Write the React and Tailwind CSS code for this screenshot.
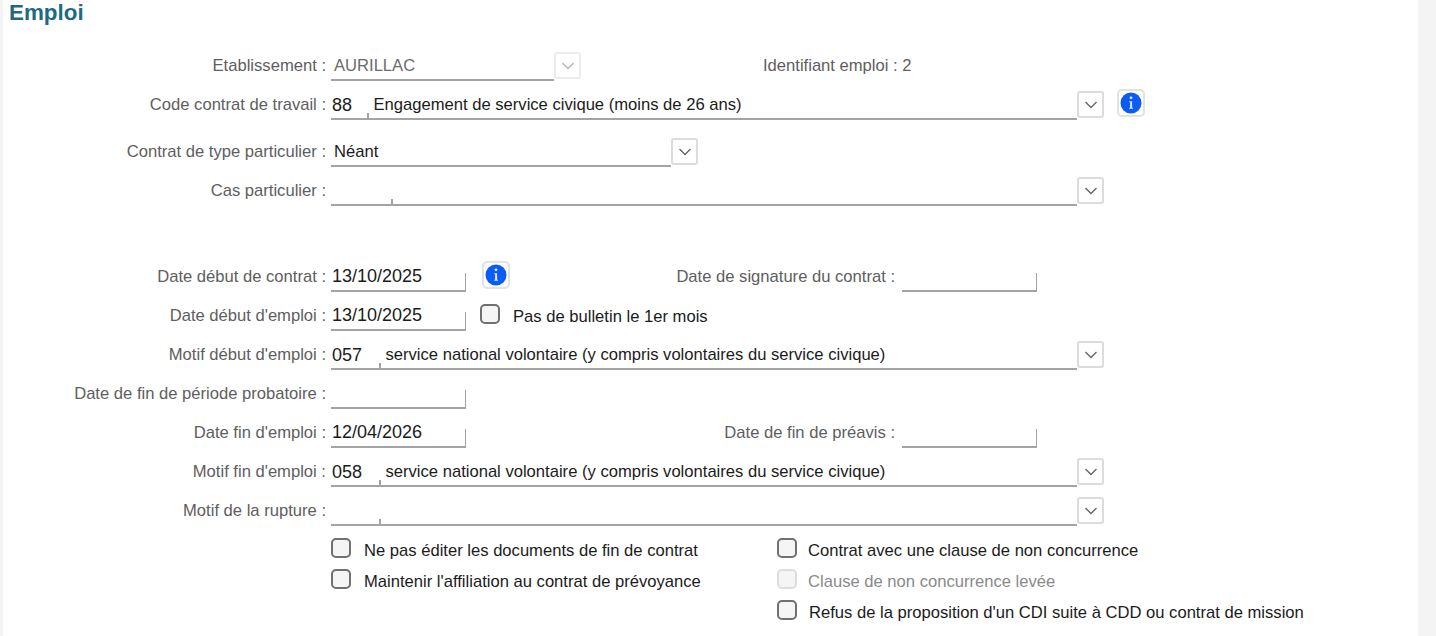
function Chevron({ disabled }) {
  return (
    <svg width="14" height="8" viewBox="0 0 14 8" fill="none" stroke={disabled ? "#b5b5b5" : "#666666"} strokeWidth="1.4">
      <path d="M1.5 1 L7 6.5 L12.5 1" />
    </svg>
  );
}

function DropButton({ disabled }) {
  return (
    <div className={`mb-[2px] flex h-[27px] w-[27px] shrink-0 items-center justify-center rounded-[3px] border-2 bg-white ${disabled ? "border-[#ececec]" : "border-[#dcdcdc]"}`}>
      <Chevron disabled={disabled} />
    </div>
  );
}

function InfoButton({ className = "" }) {
  return (
    <div className={`mb-[3px] flex h-[28px] w-[28px] shrink-0 items-center justify-center rounded-[5px] border-2 border-[#e2e2e2] bg-white ${className}`}>
      <svg width="22" height="22" viewBox="0 0 22 22">
        <circle cx="11" cy="11" r="10.5" fill="#0a5cf5" />
        <circle cx="11" cy="5.8" r="1.4" fill="#dbe7ff" />
        <path d="M9.2 9.2 H12.1 V15.8 H13 V16.8 H9.2 V15.8 H10.1 V10.2 H9.2 Z" fill="#dbe7ff" />
      </svg>
    </div>
  );
}

function Label({ children, width = "w-[323px]" }) {
  return <div className={`${width} shrink-0 self-center pb-[5px] text-right text-[#5e5e5e] whitespace-nowrap`}>{children}</div>;
}

function Field({ width, children, tick, muted, num }) {
  return (
    <div className={`flex h-[26px] ${width} items-center justify-between border-b-2 border-[#a3a3a3] ${muted ? "text-[#6b6b6b]" : "text-[#1b1b1b]"}`}>
      <span className={`${num ? "pl-[1px] pb-[4px] text-[18px]" : "pl-[3px] pb-[3px]"} whitespace-nowrap`}>{children}</span>
      {tick && <span className="h-[17px] w-[1.5px] self-end bg-[#a3a3a3]" />}
    </div>
  );
}

function DateField({ value }) {
  return <Field width="w-[135px]" tick num>{value}</Field>;
}

function CodeField({ code, text, codeWidth }) {
  return (
    <div className="flex h-[26px] w-[746px] items-center border-b-2 border-[#a3a3a3] text-[#1b1b1b]">
      <span className={`${codeWidth} shrink-0 pl-[1px] pb-[3px] text-[18px] whitespace-nowrap`}>{code}</span>
      <span className="h-[5px] w-[1.5px] shrink-0 self-end bg-[#a3a3a3]" />
      <span className="pl-[5px] pb-[3px] whitespace-nowrap">{text}</span>
    </div>
  );
}

function Row({ children, mt = "mt-[13px]" }) {
  return <div className={`flex h-[26px] items-end ${mt}`}>{children}</div>;
}

function Check({ label, disabled, gap = "ml-[13px]" }) {
  return (
    <div className="flex h-[21px] items-center">
      <span className={`h-[20px] w-[20px] shrink-0 rounded-[5px] border-2 bg-[#f5f5f5] ${disabled ? "border-[#dddddd]" : "border-[#707070]"}`} />
      <span className={`${gap} pt-[6px] whitespace-nowrap ${disabled ? "text-[#8a8a8a]" : "text-[#1b1b1b]"}`}>{label}</span>
    </div>
  );
}

const Value = ({ children }) => <div className="ml-[5px] flex h-[26px] items-end">{children}</div>;

export default function App() {
  return (
    <div className="flex h-[636px] w-[1436px] overflow-hidden bg-[#f4f4f4] text-[16.6px] leading-[20px] [font-family:'Liberation_Sans',Arial,sans-serif]">
      <div className="h-full w-[3px] shrink-0" />
      <main className="h-full w-[1415px] shrink-0 bg-white">
        <h1 className="h-[55px] pl-[6px] pt-[1px] text-[22.4px] leading-[24px] font-bold text-[#1f6a80]">Emploi</h1>

        <Row mt="mt-0">
          <Label>Etablissement :</Label>
          <Value>
            <Field width="w-[223px]" muted>AURILLAC</Field>
            <DropButton disabled />
            <span className="ml-[182px] self-center pb-[5px] whitespace-nowrap text-[#5e5e5e]">Identifiant emploi : 2</span>
          </Value>
        </Row>

        <Row>
          <Label>Code contrat de travail :</Label>
          <Value>
            <CodeField code="88" text="Engagement de service civique (moins de 26 ans)" codeWidth="w-[36px]" />
            <DropButton />
            <InfoButton className="ml-[13px]" />
          </Value>
        </Row>

        <Row mt="mt-[21px]">
          <Label>Contrat de type particulier :</Label>
          <Value>
            <Field width="w-[340px]">Néant</Field>
            <DropButton />
          </Value>
        </Row>

        <Row>
          <Label>Cas particulier :</Label>
          <Value>
            <CodeField code="" text="" codeWidth="w-[60px]" />
            <DropButton />
          </Value>
        </Row>

        <Row mt="mt-[60px]">
          <Label>Date début de contrat :</Label>
          <Value>
            <DateField value="13/10/2025" />
            <InfoButton className="ml-[16px]" />
            <Label width="w-[385px]">Date de signature du contrat :</Label>
            <div className="ml-[7px]"><DateField value="" /></div>
          </Value>
        </Row>

        <Row>
          <Label>Date début d'emploi :</Label>
          <Value>
            <DateField value="13/10/2025" />
            <div className="mb-[7px] ml-[14px]"><Check label="Pas de bulletin le 1er mois" /></div>
          </Value>
        </Row>

        <Row>
          <Label>Motif début d'emploi :</Label>
          <Value>
            <CodeField code="057" text="service national volontaire (y compris volontaires du service civique)" codeWidth="w-[48px]" />
            <DropButton />
          </Value>
        </Row>

        <Row>
          <Label>Date de fin de période probatoire :</Label>
          <Value>
            <DateField value="" />
          </Value>
        </Row>

        <Row>
          <Label>Date fin d'emploi :</Label>
          <Value>
            <DateField value="12/04/2026" />
            <Label width="w-[429px]">Date de fin de préavis :</Label>
            <div className="ml-[7px]"><DateField value="" /></div>
          </Value>
        </Row>

        <Row>
          <Label>Motif fin d'emploi :</Label>
          <Value>
            <CodeField code="058" text="service national volontaire (y compris volontaires du service civique)" codeWidth="w-[48px]" />
            <DropButton />
          </Value>
        </Row>

        <Row>
          <Label>Motif de la rupture :</Label>
          <Value>
            <CodeField code="" text="" codeWidth="w-[48px]" />
            <DropButton />
          </Value>
        </Row>

        <div className="mt-[11px] ml-[328px] flex">
          <div className="flex w-[446px] flex-col gap-[10px]">
            <Check label="Ne pas éditer les documents de fin de contrat" />
            <Check label="Maintenir l'affiliation au contrat de prévoyance" />
          </div>
          <div className="flex flex-col gap-[10px]">
            <Check label="Contrat avec une clause de non concurrence" gap="ml-[11px]" />
            <Check label="Clause de non concurrence levée" disabled gap="ml-[11px]" />
            <Check label="Refus de la proposition d'un CDI suite à CDD ou contrat de mission" gap="ml-[12px]" />
          </div>
        </div>
      </main>
    </div>
  );
}
